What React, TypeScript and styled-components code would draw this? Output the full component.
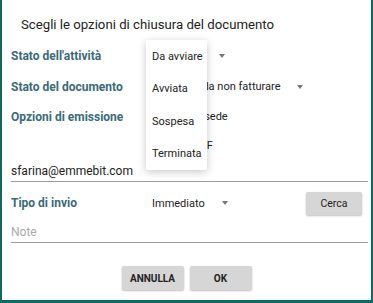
import React from "react";
import styled, { createGlobalStyle } from "styled-components";

const GlobalStyle = createGlobalStyle`
  html, body {
    margin: 0;
    padding: 0;
    background: #0f6a66;
    font-family: Roboto, "Liberation Sans", sans-serif;
  }
`;

const Page = styled.div`
  width: 373px;
  height: 303px;
  box-sizing: border-box;
  padding: 0 2px 3px 2px;
`;

const Dialog = styled.div`
  position: relative;
  height: 100%;
  background: #ffffff;
  box-sizing: border-box;
  padding: 0 3px 0 9px;
  display: flex;
  flex-direction: column;
`;

const Title = styled.h1`
  margin: 0;
  padding: 17px 0 0 10px;
  height: 40px;
  box-sizing: border-box;
  font-size: 13.2px;
  line-height: 15px;
  font-weight: 400;
  color: #222222;
`;

const Row = styled.div<{ $h: number }>`
  display: grid;
  grid-template-columns: 141px 1fr auto;
  align-items: center;
  height: ${(p) => p.$h}px;
`;

const Label = styled.div`
  font-size: 12px;
  font-weight: 700;
  color: #3a6b7a;
`;

const Value = styled.div`
  display: flex;
  align-items: center;
  font-size: 11px;
  color: #222222;
  white-space: nowrap;
`;

const Arrow = styled.span<{ $gap: number }>`
  margin-left: ${(p) => p.$gap}px;
  width: 0;
  height: 0;
  border-left: 3.5px solid transparent;
  border-right: 3.5px solid transparent;
  border-top: 4px solid #777777;
`;

const TextField = styled.div<{ $placeholder?: boolean }>`
  display: flex;
  align-items: flex-end;
  height: 100%;
  box-sizing: border-box;
  padding-bottom: 3px;
  border-bottom: 1px solid #9a9a9a;
  font-size: 12px;
  color: ${(p) => (p.$placeholder ? "#aaaaaa" : "#222222")};
`;

const FieldRow = styled.div<{ $h: number }>`
  height: ${(p) => p.$h}px;
`;

const GrayButton = styled.button<{ $w: number; $h: number }>`
  width: ${(p) => p.$w}px;
  height: ${(p) => p.$h}px;
  border: none;
  border-radius: 2px;
  background: #d6d6d6;
  box-shadow: 0 1px 2px rgba(0, 0, 0, 0.25);
  font-family: Roboto, "Liberation Sans", sans-serif;
  color: #222222;
  padding: 0;
`;

const SearchButton = styled(GrayButton)`
  font-size: 10.5px;
  font-weight: 400;
  margin-right: 6px;
`;

const ActionButton = styled(GrayButton)`
  font-size: 10px;
  font-weight: 700;
`;

const Actions = styled.div`
  display: flex;
  justify-content: center;
  gap: 6px;
  margin-top: 23px;
  padding-right: 6px;
`;

const Menu = styled.ul`
  position: absolute;
  top: 40px;
  left: 144px;
  width: 61px;
  height: 130px;
  margin: 0;
  padding: 0;
  list-style: none;
  background: #ffffff;
  box-shadow: 0 2px 8px rgba(0, 0, 0, 0.22);
  border-radius: 2px;
`;

const MenuItem = styled.li`
  height: 32.5px;
  display: flex;
  align-items: center;
  padding-left: 6px;
  font-size: 11px;
  color: #222222;
  white-space: nowrap;
`;

const rows = [
  { label: "Stato dell'attività", value: "Da avviare", arrow: 16, h: 31 },
  { label: "Stato del documento", value: "Stampato da non fatturare", arrow: 16, h: 31 },
  { label: "Opzioni di emissione", value: "Stampa in sede", h: 29 },
  { label: "", value: "Salva in PDF", h: 29 },
];

const menuItems = ["Da avviare", "Avviata", "Sospesa", "Terminata"];

export default function App() {
  return (
    <Page>
      <GlobalStyle />
      <Dialog>
        <Title>Scegli le opzioni di chiusura del documento</Title>
        {rows.map((row, i) => (
          <Row key={i} $h={row.h}>
            <Label>{row.label}</Label>
            <Value>
              {row.value}
              {row.arrow && <Arrow $gap={row.arrow} />}
            </Value>
          </Row>
        ))}
        <FieldRow $h={22}>
          <TextField>sfarina@emmebit.com</TextField>
        </FieldRow>
        <Row $h={42}>
          <Label>Tipo di invio</Label>
          <Value>
            Immediato
            <Arrow $gap={17} />
          </Value>
          <SearchButton $w={56} $h={23}>Cerca</SearchButton>
        </Row>
        <FieldRow $h={19}>
          <TextField $placeholder>Note</TextField>
        </FieldRow>
        <Actions>
          <ActionButton $w={62} $h={24}>ANNULLA</ActionButton>
          <ActionButton $w={62} $h={24}>OK</ActionButton>
        </Actions>
        <Menu>
          {menuItems.map((item) => (
            <MenuItem key={item}>{item}</MenuItem>
          ))}
        </Menu>
      </Dialog>
    </Page>
  );
}
